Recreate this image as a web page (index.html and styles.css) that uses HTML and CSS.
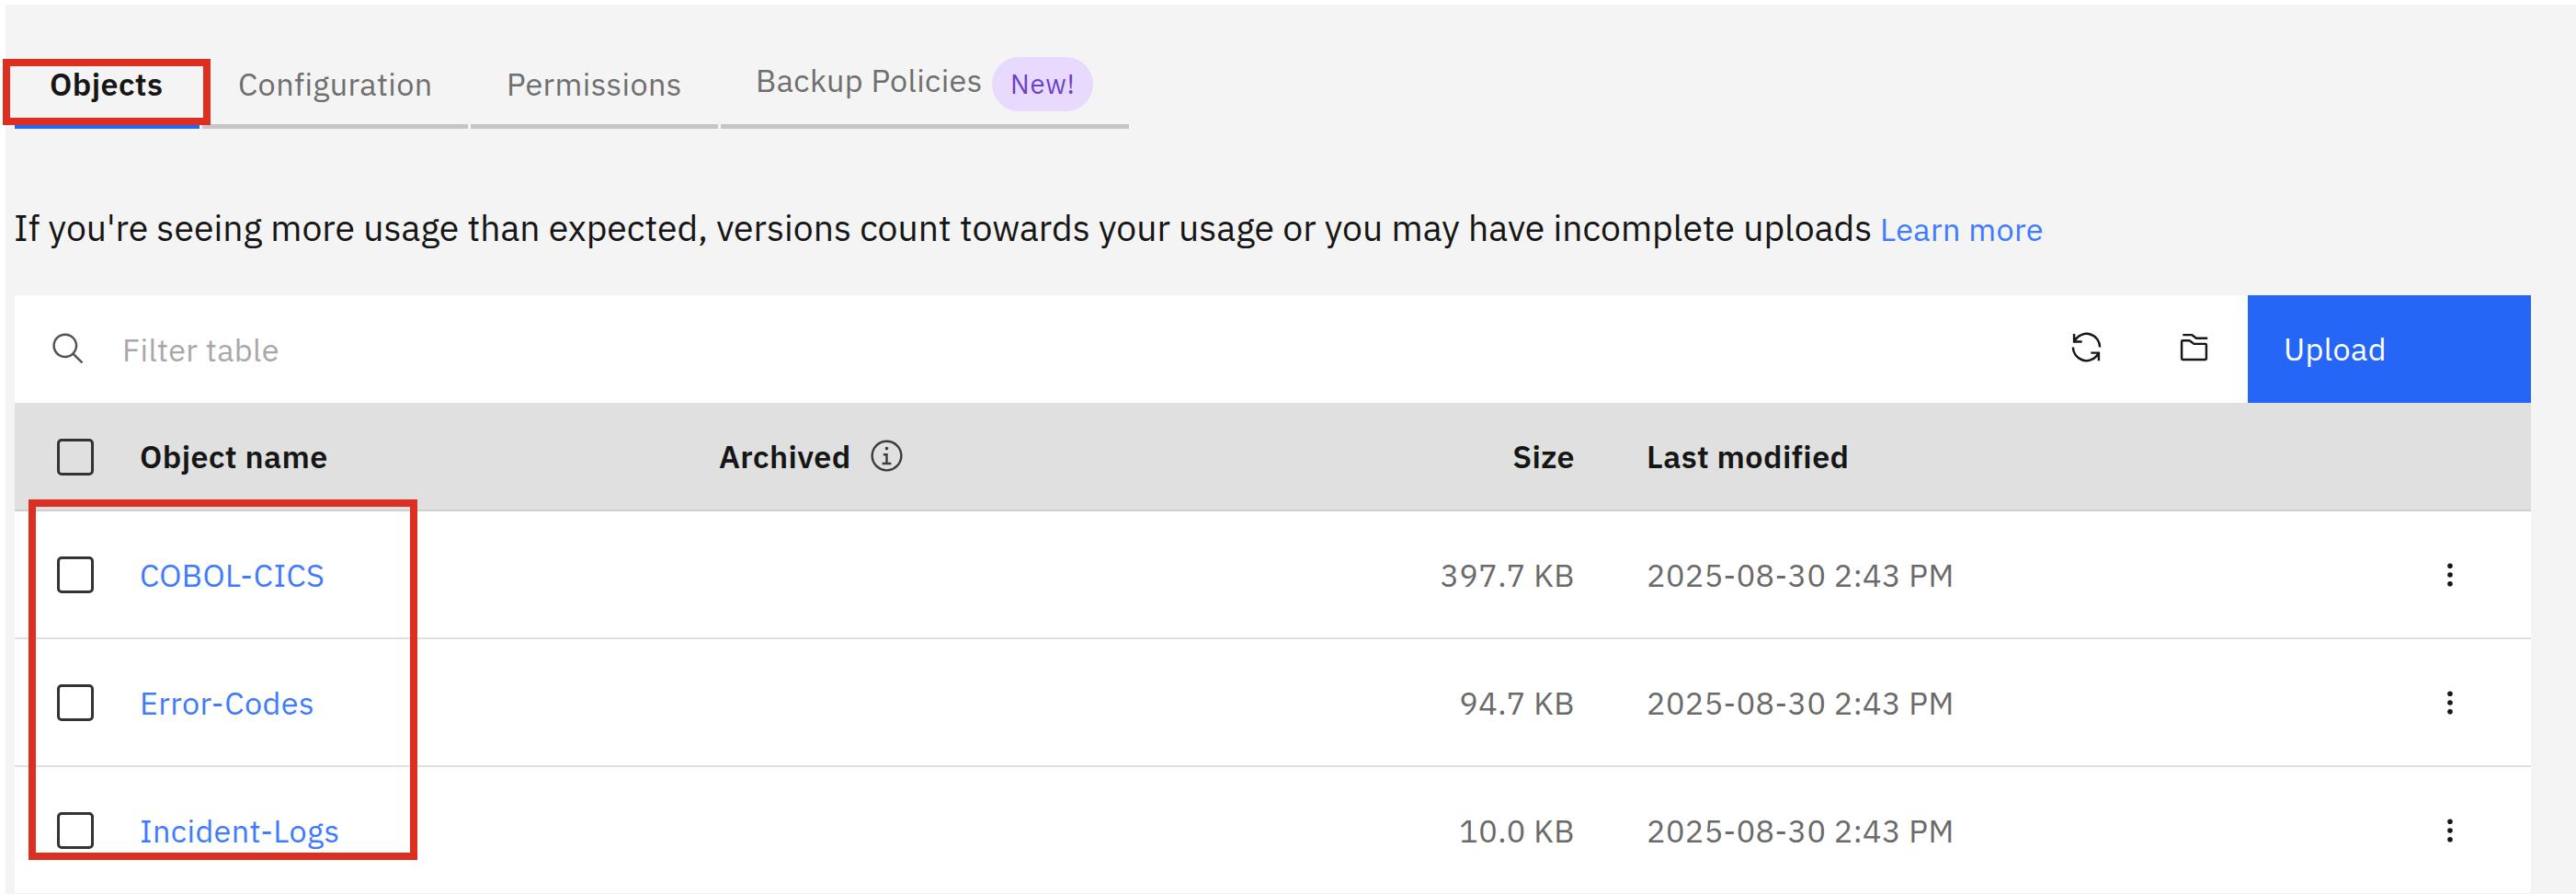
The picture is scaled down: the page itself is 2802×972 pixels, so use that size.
FILE: index.html
```html
<!DOCTYPE html>
<html lang="en">
<head>
<meta charset="utf-8">
<title>Objects</title>
<link rel="stylesheet" href="styles.css">
</head>
<body>
<main class="page">
  <nav class="tabs">
    <a class="tab tab-objects">Objects</a>
    <a class="tab tab-config">Configuration</a>
    <a class="tab tab-perm">Permissions</a>
    <a class="tab tab-backup"><span class="backup-label">Backup Policies</span><span class="tag">New!</span></a>
  </nav>
  <p class="notice"><span class="notice-text">If you're seeing more usage than expected, versions count towards your usage or you may have incomplete uploads</span><a class="learn">Learn more</a></p>
  <section class="table">
    <div class="toolbar">
      <svg class="icon search" viewBox="0 0 32 32"><path d="M29,27.586l-7.552-7.552a11.018,11.018,0,1,0-1.414,1.414L27.586,29ZM4,13a9,9,0,1,1,9,9A9.01,9.01,0,0,1,4,13Z"/></svg>
      <span class="filter">Filter table</span>
      <svg class="icon refresh" viewBox="0 0 32 32"><path d="M12 10H6.78A11 11 0 0 1 27 16h2A13 13 0 0 0 6 7.68V4H4v8h8zM20 22h5.22A11 11 0 0 1 5 16H3a13 13 0 0 0 23 8.32V28h2V20H20z"/></svg>
      <svg class="icon folder" viewBox="0 0 32 32"><path d="M26,28H6a2,2,0,0,1-2-2V11A2,2,0,0,1,6,9h5.667a2,2,0,0,1,1.2.4L16.333,12H26a2,2,0,0,1,2,2V26A2,2,0,0,1,26,28ZM11.667,11H6V26H26V14H15.667ZM28,9H17.667l-4-3H6V4h7.667a2,2,0,0,1,1.2.4L18.333,7H28Z"/></svg>
      <button class="upload">Upload</button>
    </div>
    <div class="row head">
      <span class="check"></span>
      <span>Object name</span>
      <span class="archived"><span class="archived-label">Archived</span><svg class="icon info" viewBox="0 0 32 32"><path d="M17 22V14H13v2h2v6H12v2h8V22zM16 8a1.5 1.5 0 1 0 0 3 1.5 1.5 0 0 0 0-3z"/><path d="M16 30A14 14 0 1 1 30 16 14 14 0 0 1 16 30ZM16 4A12 12 0 1 0 28 16 12 12 0 0 0 16 4Z"/></svg></span>
      <span class="size">Size</span>
      <span class="date">Last modified</span>
    </div>
    <div class="row">
      <span class="check"></span><a class="link">COBOL-CICS</a><span></span>
      <span class="size">397.7 KB</span><span class="date">2025-08-30 2:43 PM</span>
      <svg class="dots" viewBox="0 0 8 26"><circle cx="4" cy="3.2" r="2.8"/><circle cx="4" cy="13" r="2.8"/><circle cx="4" cy="22.8" r="2.8"/></svg>
    </div>
    <div class="row">
      <span class="check"></span><a class="link">Error-Codes</a><span></span>
      <span class="size">94.7 KB</span><span class="date">2025-08-30 2:43 PM</span>
      <svg class="dots" viewBox="0 0 8 26"><circle cx="4" cy="3.2" r="2.8"/><circle cx="4" cy="13" r="2.8"/><circle cx="4" cy="22.8" r="2.8"/></svg>
    </div>
    <div class="row">
      <span class="check"></span><a class="link">Incident-Logs</a><span></span>
      <span class="size">10.0 KB</span><span class="date">2025-08-30 2:43 PM</span>
      <svg class="dots" viewBox="0 0 8 26"><circle cx="4" cy="3.2" r="2.8"/><circle cx="4" cy="13" r="2.8"/><circle cx="4" cy="22.8" r="2.8"/></svg>
    </div>
  </section>
</main>
<div class="mark mark-tab"></div>
<div class="mark mark-names"></div>
</body>
</html>
```
FILE: styles.css
```css
* { box-sizing: border-box; }
body {
  margin: 0;
  height: 972px;
  overflow: hidden;
  position: relative;
  background: #fff;
  color: #161616;
  font-family: "IBM Plex Sans", Roboto, "Liberation Sans", sans-serif;
  font-size: 34.2px;
  line-height: 44px;
  letter-spacing: .39px;
  white-space: nowrap;
}
.page {
  margin: 5px 0 0 6px;
  height: 967px;
  padding: 39px 49px 0 10px;
  background: #f4f4f4;
}

/* Tabs */
.tabs { display: flex; gap: 3px; height: 96px; }
.tab {
  display: flex;
  padding: 25px 0 0 39px;
  border-bottom: 5px solid #c6c6c6;
  color: #6f6f6f;
}
.tab-objects { width: 201px; padding-left: 38px; border-color: #2566f6; color: #161616; font-weight: 600; }
.tab-config { width: 289px; }
.tab-perm { width: 269px; }
.tab-backup { width: 444px; padding: 18px 0 0 38px; }
.backup-label { width: 257px; padding-top: 3px; }
.tag {
  width: 110px;
  height: 59px;
  border-radius: 30px;
  background: #e8daff;
  color: #6e3fc8;
  font-size: 29.3px;
  line-height: 59px;
  letter-spacing: .78px;
  padding-left: 20px;
}

/* Usage notice */
.notice {
  display: flex;
  align-items: baseline;
  margin: 80px 0 45px -1px;
  height: 56px;
  font-size: 39.13px;
  line-height: 56px;
  letter-spacing: 0;
}
.notice-text { width: 2030px; }
.learn { color: #3f7bff; font-size: 34.2px; letter-spacing: .39px; }

/* Toolbar */
.table { background: #fff; }
.toolbar { display: flex; align-items: center; height: 117px; }
.icon { width: 39px; height: 39px; fill: #161616; flex: none; }
.search { margin-left: 39px; fill: #525252; }
.filter { margin: 1px auto 0 39px; color: #a8a8a8; }
.refresh { margin: -5px 78px 0 0; }
.folder { margin: -5px 39.5px 0 0; }
.upload {
  width: 308px;
  height: 117px;
  padding: 0 0 2px 39px;
  border: 0;
  background: #2566f6;
  color: #fff;
  font: inherit;
  letter-spacing: inherit;
  text-align: left;
}

/* Rows */
.row {
  display: grid;
  grid-template-columns: 136px 627px 500px 434px 78px 837px 1fr;
  align-items: center;
  height: 139px;
  border-bottom: 2px solid #e0e0e0;
  color: #6a6a6a;
}
.row:last-child { height: 138px; border-bottom: 1px solid #f0f0f0; }
.head {
  height: 118px;
  background: #e0e0e0;
  border-color: #d0d0d0;
  color: #161616;
  font-weight: 600;
}
.check {
  width: 40px;
  height: 40px;
  margin: 1px 0 0 45.5px;
  border: 3px solid #333;
  border-radius: 5px;
}
.archived { display: flex; align-items: center; padding-left: 3px; }
.archived-label { width: 163px; }
.info { margin-top: -2px; fill: #3c3c3c; }
.size { text-align: right; }
.date { grid-column: 6; }
.link { color: #3f7bff; }
.dots { width: 8px; height: 26px; fill: #161616; margin-left: 33px; }

/* Red callout frames over the page */
.mark { position: absolute; border: 8px solid #dc2f22; }
.mark-tab { left: 3px; top: 64px; width: 226px; height: 72px; }
.mark-names { left: 31px; top: 543px; width: 423px; height: 392px; }
```
